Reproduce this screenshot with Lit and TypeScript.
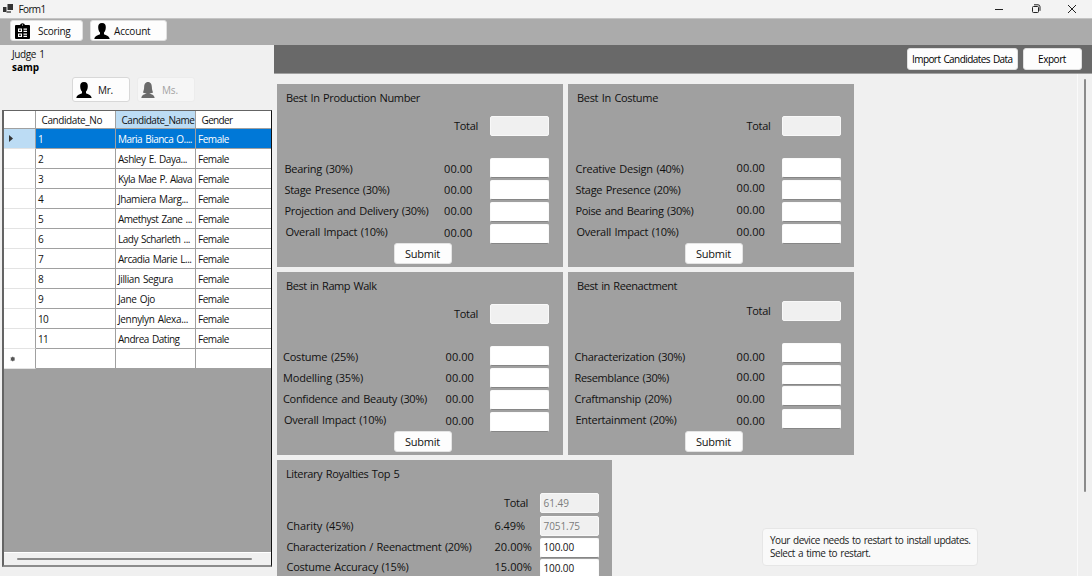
import { LitElement, html, css, svg, nothing } from "lit";
import { customElement, property } from "lit/decorators.js";
import { classMap } from "lit/directives/class-map.js";

/** A single line of text, tracked so that it fills the given width. */
@customElement("fit-text")
class FitText extends LitElement {
  @property({ type: Number }) w = 0;
  @property() text = "";
  static styles = css`
    :host { display: inline-block; white-space: pre; }
    span { display: inline-block; word-spacing: 1px; }
  `;
  updated() {
    const span = this.renderRoot.querySelector("span") as HTMLElement;
    span.style.letterSpacing = "0";
    const natural = span.getBoundingClientRect().width;
    span.style.letterSpacing = `${(this.w - natural) / this.text.length}px`;
  }
  render() {
    return html`<span>${this.text}</span>`;
  }
}

const t = (text: string, w: number) => html`<fit-text .text=${text} .w=${w}></fit-text>`;

interface Field { label: string; lw: number; value: string; vw: number; input?: string; off?: boolean }
interface Category { key: string; title: string; tw: number; total?: string; fields: Field[]; submit: boolean }

const f = (label: string, lw: number): Field => ({ label, lw, value: "00.00", vw: 28.5 });

const categories: Category[] = [
  { key: "production", title: "Best In Production Number", tw: 134, submit: true, fields: [
    f("Bearing (30%)", 68), f("Stage Presence (30%)", 105), f("Projection and Delivery (30%)", 144), f("Overall Impact (10%)", 102)] },
  { key: "costume", title: "Best In Costume", tw: 81, submit: true, fields: [
    f("Creative Design (40%)", 108), f("Stage Presence (20%)", 105), f("Poise and Bearing (30%)", 118), f("Overall Impact (10%)", 102)] },
  { key: "ramp", title: "Best in Ramp Walk", tw: 90.5, submit: true, fields: [
    f("Costume (25%)", 75), f("Modelling (35%)", 80), f("Confidence and Beauty (30%)", 144), f("Overall Impact (10%)", 102)] },
  { key: "reenact", title: "Best in Reenactment", tw: 100, submit: true, fields: [
    f("Characterization (30%)", 110.5), f("Resemblance (30%)", 94.5), f("Craftmanship (20%)", 97), f("Entertainment (20%)", 101)] },
  { key: "literary", title: "Literary Royalties Top 5", tw: 113.5, total: "61.49", submit: false, fields: [
    { label: "Charity (45%)", lw: 67, value: "6.49%", vw: 30.5, input: "7051.75", off: true },
    { label: "Characterization / Reenactment (20%)", lw: 185, value: "20.00%", vw: 37.5, input: "100.00" },
    { label: "Costume Accuracy (15%)", lw: 122, value: "15.00%", vw: 37.5, input: "100.00" }] },
];

const candidates: [string, string, number][] = [
  ["1", "Maria Bianca O....", 74], ["2", "Ashley E. Daya...", 69], ["3", "Kyla Mae P. Alava", 74],
  ["4", "Jhamiera Marg...", 70], ["5", "Amethyst Zane ...", 74], ["6", "Lady Scharleth ...", 72],
  ["7", "Arcadia Marie L...", 73.5], ["8", "Jillian Segura", 55], ["9", "Jane Ojo", 37],
  ["10", "Jennylyn Alexa...", 70], ["11", "Andrea Dating", 61.5],
];

const man = svg`<path d="M8 0C5.2 0 4 2 4.2 4.6 4.3 7 5 8.6 6 9.6V11C5.600 12.200 .8 12 .3 16H15.700C15.200 12 10.400 12.200 10 11V9.600C11 8.600 11.700 7 11.800 4.600 12 2 10.800 0 8 0Z"/>`;
const woman = svg`<path d="M8 0C4.800 0 3.700 2.400 3.600 5 3.500 7.500 3 9 2.200 10.400 3.400 11.200 5 11.300 6.200 11.100 5.600 12.400 .9 12.300 .4 16H15.600C15.100 12.300 10.400 12.400 9.800 11.100 11 11.300 12.600 11.200 13.800 10.400 13 9 12.500 7.500 12.400 5 12.300 2.400 11.200 0 8 0Z"/>`;

@customElement("score-panel")
class ScorePanel extends LitElement {
  @property({ attribute: false }) data!: Category;
  static styles = css`
    :host { display: block; }
    .panel { box-sizing: border-box; width: 286px; height: 183px; background: #a0a0a0; color: #111;
      display: flex; flex-direction: column; font-size: 11px; line-height: 20px;
      --title: 9px; --label: 7.500px; --value: 167px; --total: 177px; --input: 213px; --submit: 117px;
      --total-top: 32px; --fields-top: 22px;
      --labels: 21px 21px 21px 21px; --lpad: 1px; --values: 21px 21px 22px 22px; --vpad: 1px; }
    .costume { --value: 168.500px; --total: 178.500px; --input: 214px; --vpad: 0px; --values: 20px 22px 22px 22px; }
    .ramp { --label: 6px; --value: 168.500px; }
    .reenact { --label: 6.500px; --value: 168.500px; --total: 178.500px; --input: 214px;
      --total-top: 29px; --lpad: 4px; --vpad: 4px; --values: 20px 22px 22px 22px; }
    .literary { width: 335px; height: 116px; overflow: hidden; --label: 9.500px; --value: 217.500px; --total: 227px; --input: 263px;
      --total-top: 33px; --fields-top: 3px; --lpad: 0px; --vpad: 0px; --labels: 21px 20px 21px; --values: 21px 20px 21px; }
    .title { height: 0; padding-left: var(--title); }
    .title fit-text { padding-top: 4px; }
    .total { display: flex; height: 20px; padding-top: var(--total-top); }
    .total .name { width: calc(var(--input) - var(--total)); padding-left: var(--total); }
    .fields { display: grid; grid-template-columns: var(--value) calc(var(--input) - var(--value)) 59px; padding-top: var(--fields-top); }
    .labels { display: grid; align-content: start; grid-template-rows: var(--labels); padding: var(--lpad) 0 0 var(--label); height: 86px; box-sizing: border-box; }
    .labels fit-text:nth-child(4) { padding-left: 1px; }
    .values { display: grid; align-content: start; grid-template-rows: var(--values); padding-top: var(--vpad); box-sizing: border-box; height: 86px; }
    .inputs { display: flex; flex-direction: column; gap: 2px; height: 86px; }
    .box { box-sizing: border-box; width: 59px; height: 20px; background: #fff; border-radius: 2px; border: 1px solid #fafafa;
      border-bottom-color: #868686; padding-left: 2.500px; line-height: 19px; font-size: 10px; flex: none; }
    .box.off { background: #f0f0f0; border-color: #f8f8f8; color: #7c7c7c; }
    .literary .inputs .box { line-height: 17px; }
    .literary .inputs .box.off { line-height: 18px; }
    .literary .inputs .box:nth-child(3), .reenact .inputs .box:nth-child(3) { margin-top: -1px; }
    .reenact .inputs .box:nth-child(4) { margin-top: 1px; }
    .literary .values, .literary .labels, .literary .inputs { height: 60px; }
    .submit { box-sizing: border-box; flex: none; width: 58px; height: 21px; margin: -1px 0 0 var(--submit); background: #fdfdfd; border-radius: 3px; border: 1px solid #e4e4e4;
      padding-left: 10px; line-height: 19px; }
    .reenact .submit { margin-top: 2px; }
  `;
  render() {
    const d = this.data;
    return html`<section class="panel ${d.key}">
      <div class="title">${t(d.title, d.tw)}</div>
      <div class="total"><span class="name">${t("Total", 24)}</span>
        <div class="box off">${d.total ? t(d.total, 25.5) : nothing}</div></div>
      <div class="fields">
        <div class="labels">${d.fields.map((x) => t(x.label, x.lw))}</div>
        <div class="values">${d.fields.map((x) => t(x.value, x.vw))}</div>
        <div class="inputs">${d.fields.map((x) => html`<div class=${classMap({ box: true, off: !!x.off })}>
          ${x.input ? t(x.input, x.input.length > 6 ? 36.5 : 30.5) : nothing}</div>`)}</div>
      </div>
      ${d.submit ? html`<div class="submit">${t("Submit", 35)}</div>` : nothing}
    </section>`;
  }
}

@customElement("app-root")
class AppRoot extends LitElement {
  static styles = css`
    :host { display: block; position: relative; width: 1092px; height: 576px; overflow: hidden; background: #f0f0f0;
      font-family: "Open Sans", "Noto Sans", sans-serif; font-size: 10px; line-height: 20px; color: #111; }
    svg { display: block; flex: none; }
    .window { display: flex; flex-direction: column; height: 576px; }
    .titlebar { display: flex; align-items: center; height: 18px; background: #f3f3f3; padding-left: 3px; flex: none; }
    .titlebar .name { flex: 1; padding-left: 4.500px; }
    .controls { display: flex; gap: 26.500px; padding-right: 15px; }
    .menu { display: flex; box-sizing: border-box; gap: 7px; height: 27px; padding: 1px 0 0 10px; background: #ababab; border-top: 1px solid #c4c4c4; flex: none; }
    .btn { display: flex; box-sizing: border-box; align-items: center; background: #fdfdfd; border: 1px solid #e0e0e0; border-radius: 3px; flex: none; }
    .scoring { width: 73px; height: 21px; padding-left: 4px; gap: 8px; }
    .account { width: 77px; height: 21px; padding-left: 3px; gap: 4px; }
    .body { display: flex; flex: 1; min-height: 0; }
    .side { width: 274px; flex: none; display: flex; flex-direction: column; }
    .judge { padding-left: 12px; height: 32px; line-height: 13px; padding-top: 3px; box-sizing: border-box; display: flex; flex-direction: column; }
    .judge .who { font-weight: 700; color: #000; }
    .people { display: flex; gap: 7px; padding-left: 72px; height: 33px; flex: none; }
    .person { width: 58px; height: 25px; gap: 6px; padding-left: 3px; border: 1px solid #d8d8d8; }
    .person.dim { background: #f6f6f6; border-color: #ececec; color: #a3a3a3; gap: 7px; }
    .table { box-sizing: border-box; width: 270px; height: 457px; margin-left: 2px; background: #a0a0a0; border: 1px solid #646464; border-right-color: #111; display: flex; flex-direction: column; border-left-width: 2px; border-bottom: 2px solid #8c8c8c; }
    .grid { display: grid; grid-template-columns: 32px 80px 80px 75px; grid-auto-rows: 20px; }
    .cell { box-sizing: border-box; background: #fff; border-right: 1px solid #a0a0a0; border-bottom: 1px solid #a0a0a0; padding-left: 2px; line-height: 20px; overflow: hidden; white-space: nowrap; }
    .cell.last { border-right: 0; }
    .cell.head { height: 18px; line-height: 18px; padding-left: 5.500px; }
    .cell.mark { border-bottom-color: #e3e3e3; padding: 0; display: flex; align-items: center; }
    .cell.hot { background: #bcdcf4; }
    .cell.sel { background: #0078d7; color: #fff; }
    .grid.top { grid-auto-rows: 18px; }
    .hscroll { margin-top: auto; box-sizing: border-box; height: 13px; background: #f0f0f0; border-top: 1px solid #fff; padding: 5px 19px 0 13px; }
    .thumb { height: 2px; background: #8b8b8b; border-radius: 1px; }
    .main { flex: 1; display: flex; flex-direction: column; min-width: 0; }
    .tools { box-sizing: border-box; display: flex; justify-content: flex-end; gap: 5px; height: 29px; padding: 3px 10px 0 0; background: #696969; border-bottom: 1px solid #a0a0a0; flex: none; color: #000; }
    .import { width: 111px; height: 22px; padding-left: 4px; }
    .export { width: 59px; height: 22px; padding-left: 14px; }
    .work { flex: 1; display: flex; min-height: 0; }
    .panels { box-sizing: border-box; width: 804px; border-right: 1px solid #fafafa; display: flex; flex-wrap: wrap; align-content: flex-start; gap: 5px; padding: 10px 200px 0 3px; overflow: hidden; }
    .vscroll { padding: 5px 0 0 6px; }
    .vthumb { width: 2px; height: 413px; background: #8b8b8b; border-radius: 1px; }
    .toast { position: absolute; left: 762px; top: 528px; box-sizing: border-box; width: 216px; height: 38px; background: #f9f9f9; border: 1px solid #e6e6e6; border-radius: 4px; padding: 5px 0 0 7px; display: flex; flex-direction: column; line-height: 13px; color: #222; }
  `;

  render() {
    return html`<div class="window">
      <header class="titlebar">
        <svg width="11" height="10" viewBox="0 0 11 10"><path d="M0 3h3.500v5H0zM4.500 0H10v6H4.500z" fill="#333"/><path d="M3.500 7h4.500v2H3.500z" fill="#777"/></svg>
        <span class="name">${t("Form1", 27)}</span>
        <div class="controls">
          <svg width="10" height="10" viewBox="0 0 10 10"><path d="M1 5.500h8" stroke="#222"/></svg>
          <svg width="10" height="10" viewBox="0 0 10 10" fill="none" stroke="#222"><rect x="1.500" y="2.500" width="6" height="6" rx="1"/><path d="M3 .8h4q2 0 2 2v4"/></svg>
          <svg width="10" height="10" viewBox="0 0 10 10"><path d="M1 1l8 8M9 1l-8 8" stroke="#222"/></svg>
        </div>
      </header>
      <nav class="menu">
        <div class="btn scoring">
          <svg width="15" height="16" viewBox="0 0 15 16"><path d="M1 2h4Q5.500 .2 7.500 .2T10 2h4q1 0 1 1v12q0 1-1 1H1q-1 0-1-1V3q0-1 1-1z"/><path d="M7 1.500h1v1H7zM3 5.500h4v3.500H3zM3 10.500h4v3.500H3zM8.500 5.500h3.500v1.200H8.500zM8.500 7.800h3.500v1.200H8.500zM8.500 10.500h3.500v1.200H8.500zM8.500 12.800h3.500v1.200H8.500z" fill="#fff"/><path d="M4.200 6.600h1.600v1.300H4.200zM4.200 11.600h1.600v1.300H4.200z"/></svg>
          ${t("Scoring", 32.5)}
        </div>
        <div class="btn account"><svg width="16" height="16" viewBox="0 0 16 16">${man}</svg>${t("Account", 36.5)}</div>
      </nav>
      <div class="body">
        <aside class="side">
          <div class="judge"><span>${t("Judge 1", 32.5)}</span><span class="who">${t("samp", 27)}</span></div>
          <div class="people">
            <div class="btn person"><svg width="16" height="16" viewBox="0 0 16 16">${man}</svg>${t("Mr.", 15)}</div>
            <div class="btn person dim"><svg width="14" height="16" viewBox="0 0 16 16" fill="#6b6b6b" preserveAspectRatio="none">${woman}</svg>${t("Ms.", 16)}</div>
          </div>
          <div class="table">
            <div class="grid top">
              <div class="cell head"></div><div class="cell head">${t("Candidate_No", 60.5)}</div>
              <div class="cell head hot">${t("Candidate_Name", 73)}</div><div class="cell head last">${t("Gender", 31)}</div>
            </div>
            <div class="grid">
              ${candidates.map(([no, name, w], i) => {
                const sel = i === 0;
                return html`<div class=${classMap({ cell: true, mark: true, hot: sel })}>
                    ${sel ? html`<svg width="12" height="9" viewBox="0 0 12 9"><path d="M5 1l4 3.500-4 3.500z" fill="#333"/></svg>` : nothing}</div>
                  <div class=${classMap({ cell: true, sel })}>${t(no, no.length * 5)}</div>
                  <div class=${classMap({ cell: true, sel })}>${t(name, w)}</div>
                  <div class=${classMap({ cell: true, sel, last: true })}>${t("Female", 31)}</div>`;
              })}
              <div class="cell mark"><svg width="14" height="7" viewBox="0 0 14 7"><circle cx="8.700" cy="4" r="2" fill="#555"/><path d="M8.700 1.500v5M6.500 2.700l4.400 2.600M10.900 2.700L6.500 5.300" stroke="#555" stroke-width=".6"/></svg></div>
              <div class="cell"></div><div class="cell"></div><div class="cell last"></div>
            </div>
            <div class="hscroll"><div class="thumb"></div></div>
          </div>
        </aside>
        <main class="main">
          <div class="tools">
            <div class="btn import">${t("Import Candidates Data", 100.5)}</div>
            <div class="btn export">${t("Export", 28)}</div>
          </div>
          <div class="work">
            <div class="panels">${categories.map((c) => html`<score-panel .data=${c}></score-panel>`)}</div>
            <div class="vscroll"><div class="vthumb"></div></div>
          </div>
        </main>
      </div>
      <div class="toast">${t("Your device needs to restart to install updates.", 200.5)}${t("Select a time to restart.", 100.5)}</div>
    </div>`;
  }
}
